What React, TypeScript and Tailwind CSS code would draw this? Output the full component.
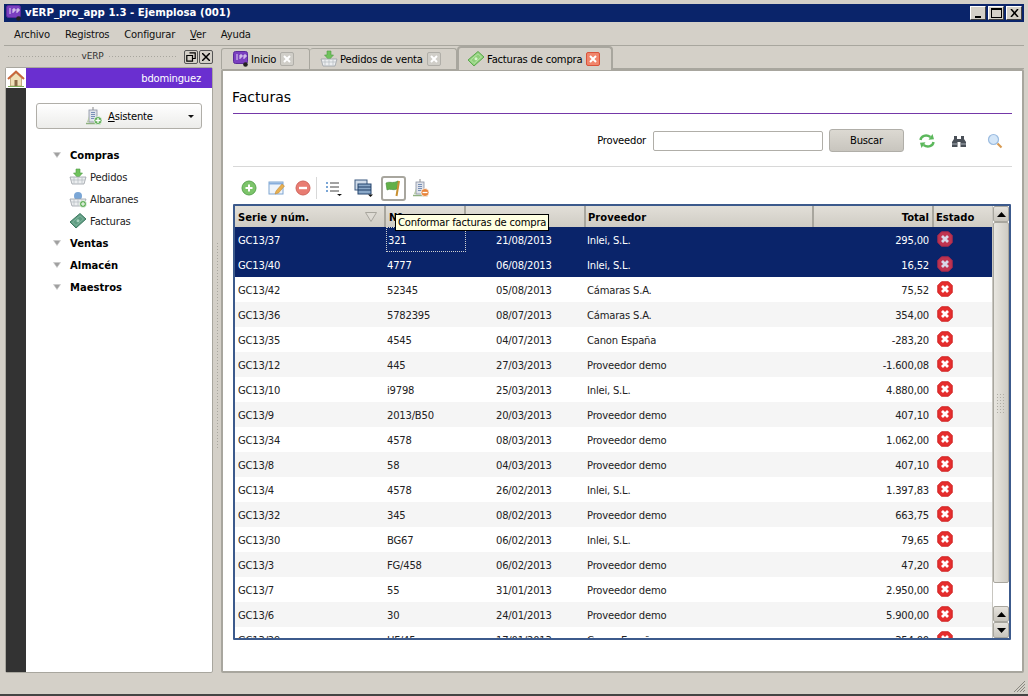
import React from "react";

const rows = [
  ["GC13/37", "321", "21/08/2013", "Inlei, S.L.", "295,00"],
  ["GC13/40", "4777", "06/08/2013", "Inlei, S.L.", "16,52"],
  ["GC13/42", "52345", "05/08/2013", "Cámaras S.A.", "75,52"],
  ["GC13/36", "5782395", "08/07/2013", "Cámaras S.A.", "354,00"],
  ["GC13/35", "4545", "04/07/2013", "Canon España", "-283,20"],
  ["GC13/12", "445", "27/03/2013", "Proveedor demo", "-1.600,08"],
  ["GC13/10", "i9798", "25/03/2013", "Inlei, S.L.", "4.880,00"],
  ["GC13/9", "2013/B50", "20/03/2013", "Proveedor demo", "407,10"],
  ["GC13/34", "4578", "08/03/2013", "Proveedor demo", "1.062,00"],
  ["GC13/8", "58", "04/03/2013", "Proveedor demo", "407,10"],
  ["GC13/4", "4578", "26/02/2013", "Inlei, S.L.", "1.397,83"],
  ["GC13/32", "345", "08/02/2013", "Proveedor demo", "663,75"],
  ["GC13/30", "BG67", "06/02/2013", "Inlei, S.L.", "79,65"],
  ["GC13/3", "FG/458", "06/02/2013", "Proveedor demo", "47,20"],
  ["GC13/7", "55", "31/01/2013", "Proveedor demo", "2.950,00"],
  ["GC13/6", "30", "24/01/2013", "Proveedor demo", "5.900,00"],
  ["GC13/29", "HF/45", "17/01/2013", "Canon España", "354,00"],
];

const ErrorIcon = ({ dim }: { dim?: boolean }) => (
  <svg width="16" height="16" viewBox="0 0 16 16">
    <path d="M4.500 .8h7L15.200 4.500v7L11.500 15.200h-7L.8 11.500v-7z" fill={dim ? "#c03450" : "#e62e2e"} stroke={dim ? "#a82a4c" : "#cf2424"} />
    <path d="M5 5l6 6M11 5l-6 6" stroke={dim ? "#d8d8e8" : "#fff"} strokeWidth="2.800" />
  </svg>
);

const LogoIcon = () => (
  <svg width="16" height="16" viewBox="0 0 16 16">
    <rect x="0.5" y="0.5" width="14" height="12" rx="2" fill="#7a3fc0" stroke="#5a2a9a" />
    <path d="M3 4h2M3 6h2M3 8h2M7 4v4M7 4h2v2H7M11 4v4M11 4h2v2h-2" stroke="#fff" strokeWidth="0.8" fill="none" />
    <circle cx="12.5" cy="13.5" r="2.3" fill="#222" />
  </svg>
);

const CloseBox = ({ red }: { red?: boolean }) => (
  <span className={`flex h-[14px] w-[14px] items-center justify-center rounded-[2px] border ${red ? "border-[#d9533a] bg-[#f0856b]" : "border-[#b0aea8] bg-[#d0cec8]"}`}>
    <svg width="8" height="8" viewBox="0 0 8 8"><path d="M1 1l6 6M7 1L1 7" stroke="#fff" strokeWidth="2" /></svg>
  </span>
);

const Basket = ({ badge }: { badge: "down" | "plus" }) => (
  <svg width="18" height="18" viewBox="0 0 18 18">
    {badge === "down" ? (
      <path d="M7 1h4v4h2.500L9 10 4.500 5H7z" fill="#6fc25c" stroke="#4d9a44" strokeWidth=".6" />
    ) : (
      <circle cx="9" cy="6" r="4" fill="#7aa6d6" />
    )}
    <path d="M1 9h16l-2 7H3z" fill="#eceef0" stroke="#9aa0a6" strokeWidth=".8" />
    <path d="M5 9.500v6M9 9.500v6M13 9.500v6M2 12h14" stroke="#b4bac0" strokeWidth=".7" />
    {badge === "plus" && (
      <>
        <circle cx="14" cy="14" r="3.500" fill="#5fae57" stroke="#fff" strokeWidth=".7" />
        <path d="M14 12v4M12 14h4" stroke="#fff" strokeWidth="1" />
      </>
    )}
  </svg>
);

const Money = ({ light }: { light?: boolean }) => (
  <svg width="18" height="18" viewBox="0 0 18 18">
    <path d="M1 10L11 1.500l6 5.500L7 16z" fill={light ? "#8fd07a" : "#5f9c82"} stroke={light ? "#5da84f" : "#3e7a62"} />
    <path d="M3.500 10L11 3.800l3.500 3.200L7 13.500z" fill="none" stroke={light ? "#c6ecb8" : "#8fc0aa"} strokeWidth=".7" />
    <circle cx="9" cy="8.700" r="1.500" fill={light ? "#d8f4cc" : "#a6d2be"} />
  </svg>
);

const Building = ({ kind }: { kind: "plus" | "minus" }) => (
  <svg width="18" height="18" viewBox="0 0 18 18">
    <path d="M8 0v3" stroke="#888" />
    <rect x="4" y="3" width="8" height="12" fill="#dfe3ea" stroke="#8890a0" strokeWidth=".8" />
    <path d="M6 5.500h4M6 7.500h4M6 9.500h4M6 11.500h4" stroke="#6c86b0" strokeWidth=".9" />
    <path d="M1 16.500h15" stroke="#8fb080" strokeWidth="1.500" />
    <path d="M2 15l2-6v6z" fill="#b6c8a8" />
    <circle cx="13" cy="13.500" r="4" fill={kind === "plus" ? "#5fae57" : "#e8843a"} stroke="#fff" strokeWidth=".7" />
    <path d={kind === "plus" ? "M13 11v5M10.500 13.500h5" : "M10.500 13.500h5"} stroke="#fff" strokeWidth="1.300" />
  </svg>
);

const Tri = () => (
  <svg width="8" height="6" viewBox="0 0 8 6"><path d="M.5.500h7L4 5.500z" fill="#a0a0a0" stroke="#c8c8c8" strokeWidth=".6" /></svg>
);

const ScrollBtn = ({ up }: { up?: boolean }) => (
  <div className="flex h-[16px] w-[16px] items-center justify-center rounded-[2px] border border-[#a8a69e] bg-gradient-to-b from-[#e6e3dd] to-[#c8c5bd]">
    <svg width="9" height="5" viewBox="0 0 9 5"><path d={up ? "M0 5h9L4.500 0z" : "M0 0h9L4.500 5z"} fill="#000" /></svg>
  </div>
);

const TreeGroup = ({ label }: { label: string }) => (
  <div className="flex h-[22px] items-center font-bold tracking-normal text-black">
    <span className="ml-[27px] mr-[9px] flex w-[8px]"><Tri /></span>
    {label}
  </div>
);

const TreeItem = ({ icon, label }: { icon: React.ReactNode; label: string }) => (
  <div className="flex h-[22px] items-center text-[#222]">
    <span className="ml-[43px] mr-[3px] flex w-[18px]">{icon}</span>
    {label}
  </div>
);

const Sep = () => <span className="mx-[3px] h-[22px] w-px bg-[#d8d8d8]" />;

const Dots = ({ w }: { w: string }) => (
  <span className={`${w} h-[3px] [background-image:radial-gradient(#a8a69e_1px,transparent_1px)] [background-size:3px_3px]`} />
);

const HeaderCell = ({ w, children, right }: { w: string; children?: React.ReactNode; right?: boolean }) => (
  <div className={`${w} flex h-full shrink-0 items-center border-r-2 border-r-[#a8a69e] px-[3px] pt-[1px] font-bold tracking-normal ${right ? "justify-end" : ""}`}>
    {children}
  </div>
);

export default function App() {
  return (
    <div className="relative flex h-[696px] w-[1028px] flex-col overflow-hidden border-b-2 border-b-[#444] bg-[#d4d0c8] px-[4px] pt-[4px] text-[10px] tracking-[-0.2px] text-black [font-family:'DejaVu_Sans',Tahoma,sans-serif]">
      {/* title bar */}
      <div className="flex h-[18px] shrink-0 items-center bg-[#0a246a] pl-[2px] pr-[2px] text-white">
        <LogoIcon />
        <span className="ml-[3px] text-[10.2px] font-bold tracking-normal">vERP_pro_app 1.3 - Ejemplosa (001)</span>
        <div className="ml-auto flex gap-[2px]">
          {["min", "max"].map((k) => (
            <span key={k} className="flex h-[14px] w-[16px] items-end justify-center border border-b-[#404040] border-l-white border-r-[#404040] border-t-white bg-[#d4d0c8]">
              {k === "min" ? <span className="mb-[1px] h-[2px] w-[6px] bg-black" /> : <span className="mb-[1px] h-[10px] w-[11px] border border-t-2 border-black" />}
            </span>
          ))}
          <span className="flex h-[14px] w-[16px] items-center justify-center border border-b-[#404040] border-l-white border-r-[#404040] border-t-white bg-[#d4d0c8]">
            <svg width="9" height="8" viewBox="0 0 9 8"><path d="M1 0l7 8M8 0L1 8" stroke="#000" strokeWidth="1.500" /></svg>
          </span>
        </div>
      </div>
      {/* menu */}
      <div className="flex h-[24px] shrink-0 items-center gap-[15px] border-b border-b-[#a8a69e] pl-[10px] pt-[2px] text-[#111]">
        <span>Archivo</span>
        <span>Registros</span>
        <span>Configurar</span>
        <span><span className="underline">V</span>er</span>
        <span>Ayuda</span>
      </div>

      {/* body */}
      <div className="flex min-h-0 flex-1">
        {/* left dock */}
        <div className="flex w-[209px] shrink-0 flex-col pl-[1px]">
          <div className="flex h-[21px] shrink-0 items-center gap-[4px] pl-[2px] text-[9px] text-[#333]">
            <Dots w="w-[71px]" />
            <span>vERP</span>
            <Dots w="w-[71px]" />
            <span className="ml-[2px] flex h-[14px] w-[14px] items-center justify-center rounded-[2px] border border-[#555] bg-[#d4d0c8]">
              <svg width="10" height="10" viewBox="0 0 10 10"><path d="M3.500 .8h5.700v5.700H7M.8 3.500h5.700v5.700H.8z" fill="none" stroke="#000" strokeWidth="1.200" /></svg>
            </span>
            <span className="-ml-[3px] flex h-[14px] w-[14px] items-center justify-center rounded-[2px] border border-[#555] bg-[#d4d0c8]">
              <svg width="8" height="8" viewBox="0 0 8 8"><path d="M0 0l8 8M8 0L0 8" stroke="#000" strokeWidth="1.500" /></svg>
            </span>
          </div>
          <div className="flex min-h-0 flex-1 rounded-[2px] border border-[#a8a69e] bg-white">
            <div className="flex w-[20px] shrink-0 flex-col bg-[#333]">
              <div className="flex h-[20px] items-center justify-center bg-white">
                <svg width="18" height="17" viewBox="0 0 18 17">
                  <path d="M3.500 8v8h11V8L9 3z" fill="#efe0b8" stroke="#b09060" strokeWidth=".7" />
                  <path d="M1 9l8-7.500L17 9" fill="none" stroke="#c8663a" strokeWidth="2" />
                  <rect x="7.500" y="10" width="3" height="6" fill="#8a6a48" />
                  <path d="M1 16.500h16" stroke="#7fae5a" />
                </svg>
              </div>
            </div>
            <div className="flex min-w-0 flex-1 flex-col">
              <div className="flex h-[20px] shrink-0 items-center justify-end bg-[#6a2fd0] pr-[11px] text-white">bdominguez</div>
              <div className="mx-[10px] mt-[15px] flex h-[26px] shrink-0 items-center rounded-[3px] border border-[#b0aea8] bg-gradient-to-b from-white to-[#ececea]">
                <span className="ml-[48px] mr-[5px] flex"><Building kind="plus" /></span>
                <span><span className="underline">A</span>sistente</span>
                <svg className="ml-auto mr-[7px]" width="6" height="3" viewBox="0 0 6 3"><path d="M0 0h6L3 3z" fill="#111" /></svg>
              </div>
              <div className="mt-[15px]">
                <TreeGroup label="Compras" />
                <TreeItem icon={<Basket badge="down" />} label="Pedidos" />
                <TreeItem icon={<Basket badge="plus" />} label="Albaranes" />
                <TreeItem icon={<Money />} label="Facturas" />
                <TreeGroup label="Ventas" />
                <TreeGroup label="Almacén" />
                <TreeGroup label="Maestros" />
              </div>
            </div>
          </div>
          <div className="h-[21px] shrink-0" />
        </div>

        {/* splitter */}
        <div className="flex w-[8px] shrink-0 items-center justify-center pb-[50px]">
          <Dots w="!h-[206px] !w-[3px]" />
        </div>

        {/* right */}
        <div className="flex min-w-0 flex-1 flex-col">
          {/* tabs */}
          <div className="flex h-[23px] shrink-0 items-end">
            <div className="flex h-[21px] w-[89px] items-center gap-[2px] rounded-t-[3px] border border-b-0 border-[#a8a69e] bg-[#d4d0c8] pl-[11px]">
              <LogoIcon /><span>Inicio</span><span className="ml-[2px]"><CloseBox /></span>
            </div>
            <div className="flex h-[21px] w-[147px] items-center gap-[2px] rounded-t-[3px] border border-b-0 border-l-0 border-[#a8a69e] bg-[#d4d0c8] pl-[10px]">
              <Basket badge="down" /><span>Pedidos de venta</span><span className="ml-[2px]"><CloseBox /></span>
            </div>
            <div className="relative z-10 -mb-[1px] flex h-[24px] w-[156px] items-center gap-[2px] rounded-t-[4px] border-2 border-b-0 border-[#a8a69e] bg-[#d4d0c8] pl-[8px]">
              <Money light /><span>Facturas de compra</span><span className="ml-[2px]"><CloseBox red /></span>
            </div>
            <div className="h-px flex-1 bg-[#a8a69e]" />
          </div>

          {/* content */}
          <div className="relative flex min-h-0 flex-1 flex-col rounded-[2px] border-2 border-[#a8a69e] bg-white px-[10px]">
            <div className="flex h-[43px] shrink-0 items-end border-b border-b-[#7438a8] pb-[7px] text-[14px] leading-[18px] tracking-normal"><span className="-ml-px">Facturas</span></div>
            <div className="flex h-[53px] shrink-0 items-center border-b border-b-[#d8d8d8] pt-[1px]">
              <span className="ml-auto mr-[7px]">Proveedor</span>
              <span className="h-[20px] w-[170px] rounded-[2px] border border-[#b0aea8] bg-white" />
              <span className="ml-[6px] flex h-[23px] w-[75px] items-center justify-center rounded-[3px] border border-[#b0aea8] bg-gradient-to-b from-[#dcd9d2] to-[#c8c5be]">Buscar</span>
              <span className="ml-[14px] flex w-[18px]">
                <svg width="18" height="18" viewBox="0 0 18 18">
                  <path d="M2.500 8C3 4 8 2 12.500 5" fill="none" stroke="#5cb85c" strokeWidth="2.400" />
                  <path d="M10.500 7.800l5.500-.5-1.500-5.300z" fill="#5cb85c" />
                  <path d="M15.500 10C15 14 10 16 5.500 13" fill="none" stroke="#5cb85c" strokeWidth="2.400" />
                  <path d="M7.500 10.200l-5.500.5 1.500 5.300z" fill="#5cb85c" />
                </svg>
              </span>
              <span className="ml-[15px] flex w-[16px]">
                <svg width="16" height="16" viewBox="0 0 16 16">
                  <path d="M3 3h3v3h4V3h3v3l2 3v5H9.500V9h-3v5H1V9l2-3z" fill="#4a5058" />
                  <path d="M1 11h5M10 11h5" stroke="#a8b0b8" />
                </svg>
              </span>
              <span className="ml-[20px] mr-[9px] flex w-[16px]">
                <svg width="16" height="16" viewBox="0 0 16 16">
                  <circle cx="6.500" cy="6.500" r="5" fill="#d4e6f8" stroke="#9cbce0" strokeWidth="1.200" />
                  <path d="M10.500 10.500l4 4" stroke="#d89a50" strokeWidth="2.200" />
                </svg>
              </span>
            </div>

            {/* toolbar */}
            <div className="flex h-[37px] shrink-0 items-center pl-[8px] pt-[5px]">
              <span className="flex w-[18px]"><svg width="16" height="16" viewBox="0 0 16 16"><circle cx="8" cy="8" r="7" fill="#7cc46a" stroke="#5aa450" /><path d="M8 4.500v7M4.500 8h7" stroke="#fff" strokeWidth="2" /></svg></span>
              <span className="ml-[9px] flex w-[18px]"><svg width="18" height="16" viewBox="0 0 18 16"><rect x="1" y="2" width="14" height="12" fill="#eef4fb" stroke="#7fa6d2" /><path d="M1 2.500h14v2H1z" fill="#88aedc" /><path d="M7 14l1-3 6-7 2.500 2-6 7z" fill="#e8b050" stroke="#b88030" strokeWidth=".5" /></svg></span>
              <span className="ml-[9px] flex w-[18px]"><svg width="16" height="16" viewBox="0 0 16 16"><circle cx="8" cy="8" r="7" fill="#e87c72" stroke="#d0655c" /><rect x="4" y="6.800" width="8" height="2.400" fill="#fff" /></svg></span>
              <Sep />
              <span className="ml-[5px] flex w-[18px]"><svg width="18" height="16" viewBox="0 0 18 16"><path d="M1 3h2M1 7h2M1 11h2" stroke="#7aa6d6" strokeWidth="2" /><path d="M5 3h9M5 7h9M5 11h9" stroke="#444" /><path d="M12 14h5l-2.500 2z" fill="#111" /></svg></span>
              <span className="ml-[1px]"><Sep /></span>
              <span className="ml-[4px] flex w-[20px]"><svg width="20" height="18" viewBox="0 0 20 18"><rect x="1" y="1" width="12" height="10" fill="#d0dcea" stroke="#3c5a80" /><rect x="4" y="5" width="13" height="10" fill="#8aa8c8" stroke="#24446e" /><path d="M4 8h13M4 11h13" stroke="#1e3c64" /><path d="M14 15.500h5l-2.500 2.500z" fill="#111" /></svg></span>
              <span className="ml-[1px]"><Sep /></span>
              <span className="flex h-[25px] w-[25px] items-center justify-center rounded-[3px] border-2 border-[#a8a69e] bg-white"><svg width="18" height="18" viewBox="0 0 18 18"><path d="M1 4c4-2 6 1 12-2l-1 8c-4 2-7-1-10 1z" fill="#62b048" stroke="#3f8a34" strokeWidth=".6" /><path d="M14 2l-2.500 15" stroke="#c89030" strokeWidth="2" /></svg></span>
              <span className="ml-[6px] flex"><Building kind="minus" /></span>
            </div>

            {/* table */}
            <div className="relative flex h-[436px] w-[778px] shrink-0 flex-col overflow-hidden rounded-[1px] border-2 border-[#3c5a8c]">
              <div className="flex min-h-0 flex-1">
                <div className="flex min-w-0 flex-1 flex-col overflow-hidden">
                  <div className="flex h-[21px] shrink-0 bg-gradient-to-b from-[#e2dfd8] to-[#cfccc4]">
                    <HeaderCell w="w-[151px]">Serie y núm.<span className="ml-auto mr-[4px] flex"><svg width="12" height="10" viewBox="0 0 12 10"><path d="M.5.500h11L6 9.500z" fill="#dedbd4" stroke="#a8a69e" /></svg></span></HeaderCell>
                    <HeaderCell w="w-[80px]">Nº</HeaderCell>
                    <HeaderCell w="w-[120px]" />
                    <HeaderCell w="w-[228px]"><span className="-ml-px">Proveedor</span></HeaderCell>
                    <HeaderCell w="w-[120px]" right>Total</HeaderCell>
                    <div className="flex items-center pl-[2px] pt-[1px] font-bold tracking-normal">Estado</div>
                  </div>
                  {rows.map((r, i) => {
                    const sel = i < 2;
                    return (
                      <div key={i} className={`flex h-[25px] shrink-0 items-center ${sel ? "bg-[#0a246a] text-white" : i % 2 === 1 ? "bg-[#f5f5f5] text-[#222]" : "bg-white text-[#222]"}`}>
                        <div className="w-[151px] shrink-0 pl-[3px] pt-[2px]">{r[0]}</div>
                        <div className={`h-full w-[80px] shrink-0 ${i === 0 ? "mb-[2px] h-[23px] self-start border border-dotted border-[#d0d0d0] pt-[2px]" : "pt-[2px]"} flex items-center pl-[1px]`}>{r[1]}</div>
                        <div className="w-[120px] shrink-0 pl-[30px] pt-[2px]">{r[2]}</div>
                        <div className="w-[228px] shrink-0 pl-[1px] pt-[2px]">{r[3]}</div>
                        <div className="w-[120px] shrink-0 pr-[5px] pt-[2px] text-right">{r[4]}</div>
                        <div className="-mt-[1px] flex pl-[3px]"><ErrorIcon dim={sel} /></div>
                      </div>
                    );
                  })}
                </div>
                {/* scrollbar */}
                <div className="flex w-[17px] shrink-0 flex-col items-center border-l border-l-[#c8c6c0] bg-white [background-image:radial-gradient(#c8c6c0_0.5px,transparent_0.5px)] [background-size:2px_2px]">
                  <ScrollBtn up />
                  <div className="flex h-[361px] w-[16px] items-center justify-center rounded-[2px] border border-[#a8a69e] bg-gradient-to-r from-[#e8e6e0] to-[#cfccc4]">
                    <span className="h-[20px] w-[10px] [background-image:radial-gradient(#aeaca4_1px,transparent_1px)] [background-size:3px_3px]" />
                  </div>
                  <div className="mt-auto flex flex-col">
                    <ScrollBtn up />
                    <ScrollBtn />
                  </div>
                </div>
              </div>
            </div>

            {/* tooltip */}
            <div className="absolute left-[172px] top-[143px] z-20 flex h-[17px] items-center border border-black bg-[#ffffe1] px-[2px] whitespace-nowrap">Conformar facturas de compra</div>
          </div>
          <div className="h-[21px] shrink-0" />
        </div>
      </div>

      {/* size grip */}
      <svg className="absolute bottom-[1px] right-[2px]" width="14" height="14" viewBox="0 0 14 14">
        <path d="M13 2L2 13M13 5L5 13M13 8L8 13M13 11L11 13" stroke="#8a8880" strokeWidth="1" />
      </svg>
    </div>
  );
}
